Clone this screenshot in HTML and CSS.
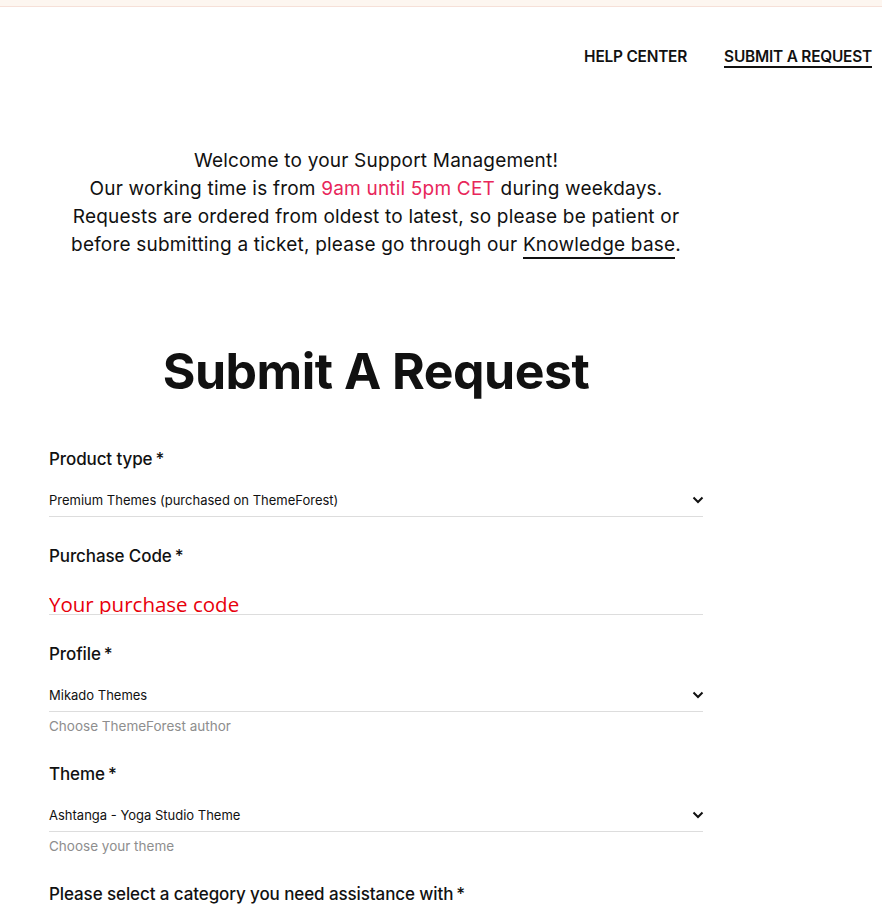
FILE: index.html
```html
<!DOCTYPE html>
<html lang="en">
<head>
  <meta charset="UTF-8" />
  <meta name="viewport" content="width=device-width, initial-scale=1.0"/>
  <title>Submit A Request</title>
  <link rel="stylesheet" href="styles.css">
</head>
<body>
  <div class="topbar"></div>

  <nav class="nav">
    <a href="#">Help Center</a>
    <a href="#" class="active">Submit A Request</a>
  </nav>

  <main class="content">
    <p class="welcome">
      Welcome to your Support Management!<br>
      Our working time is from <span class="hours">9am until 5pm CET</span> during weekdays.<br>
      Requests are ordered from oldest to latest, so please be patient or<br>
      before submitting a ticket, please go through our <a href="#">Knowledge base</a>.
    </p>

    <h1>Submit A Request</h1>

    <form class="request-form">
      <div class="field">
        <label>Product type<span class="req">*</span></label>
        <div class="select">
          <span>Premium Themes (purchased on ThemeForest)</span>
          <svg width="12" height="8" viewBox="0 0 12 8"><path d="M1.5 1.5 6 6l4.5-4.5" fill="none" stroke="#111" stroke-width="2"/></svg>
        </div>
      </div>

      <div class="field">
        <label>Purchase Code<span class="req">*</span></label>
        <input type="text" class="text-input" placeholder="Your purchase code">
      </div>

      <div class="field">
        <label>Profile<span class="req">*</span></label>
        <div class="select">
          <span>Mikado Themes</span>
          <svg width="12" height="8" viewBox="0 0 12 8"><path d="M1.5 1.5 6 6l4.5-4.5" fill="none" stroke="#111" stroke-width="2"/></svg>
        </div>
        <p class="hint">Choose ThemeForest author</p>
      </div>

      <div class="field">
        <label>Theme<span class="req">*</span></label>
        <div class="select">
          <span>Ashtanga - Yoga Studio Theme</span>
          <svg width="12" height="8" viewBox="0 0 12 8"><path d="M1.5 1.5 6 6l4.5-4.5" fill="none" stroke="#111" stroke-width="2"/></svg>
        </div>
        <p class="hint">Choose your theme</p>
      </div>

      <div class="field">
        <label>Please select a category you need assistance with<span class="req">*</span></label>
      </div>
    </form>
  </main>
</body>
</html>
```

FILE: styles.css
```css
body {
  margin: 0;
  font-family: Inter, "Noto Sans", sans-serif;
  color: #111;
  background: #fff;
}
.topbar {
  height: 6px;
  background: #fdf6f0;
  border-bottom: 1px solid #f6e0d8;
}
.nav {
  display: flex;
  justify-content: flex-end;
  gap: 37px;
  padding: 41px 10px 0 0;
}
.nav a {
  color: #111;
  text-decoration: none;
  text-transform: uppercase;
  font-size: 15.4px;
  font-weight: 600;
  letter-spacing: -0.2px;
  line-height: 18px;
  border-bottom: 2px solid transparent;
}
.nav a.active {
  border-bottom-color: #111;
}
.content {
  width: 654px;
  margin-left: 49px;
}
.welcome {
  margin: 79px 0 0;
  text-align: center;
  font-size: 19px;
  line-height: 28px;
  font-weight: 400;
  letter-spacing: 0.2px;
}
.welcome .hours {
  color: #e8265a;
}
.welcome a {
  color: #111;
  text-decoration: none;
  border-bottom: 2px solid #111;
  padding-bottom: 1px;
}
h1 {
  margin: 83px 0 0;
  text-align: center;
  font-size: 50px;
  line-height: 58px;
  font-weight: 700;
  letter-spacing: -0.5px;
}
.request-form {
  margin-top: 47px;
}
.field {
  margin-bottom: 27px;
}
.field label {
  display: block;
  font-size: 17px;
  font-weight: 500;
  line-height: 24px;
  letter-spacing: -0.1px;
}
.req {
  margin-left: 3px;
}
.select {
  display: flex;
  justify-content: space-between;
  align-items: center;
  margin-top: 13px;
  height: 32px;
  border-bottom: 1px solid #ddd;
  font-size: 13px;
}
.select svg {
  margin-right: -1px;
}
.text-input {
  display: block;
  width: 100%;
  box-sizing: border-box;
  margin-top: 16px;
  height: 31px;
  border: none;
  border-bottom: 1px solid #ddd;
  padding: 10px 0 0;
  outline: none;
  font-family: "Open Sans", sans-serif;
  font-size: 20.5px;
}
.text-input::placeholder {
  color: #e8000b;
  opacity: 1;
}
.hint {
  margin: 5px 0 0;
  font-size: 13.5px;
  line-height: 18px;
  color: #8e8e8e;
}
```
